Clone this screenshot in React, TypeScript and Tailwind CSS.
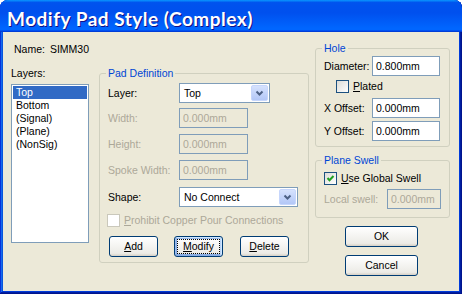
import React from 'react';

const Chevron = () => (
  <svg width="9" height="6" viewBox="0 0 9 6">
    <polyline points="1.5,1.5 4.5,4.5 7.5,1.5" fill="none" stroke="#4D6185" strokeWidth="2" />
  </svg>
);

const Combo = ({ value, w }: { value: string; w: string }) => (
  <div className={`h-[20px] ${w} border border-[#7F9DB9] bg-white flex items-center pl-[4px] pr-[1px]`}>
    <span className="flex-1">{value}</span>
    <div className="w-[17px] h-[16px] rounded-[2px] border border-[#C6D6FC] bg-[linear-gradient(180deg,#D6E2FD,#B3C7F7)] flex items-center justify-center">
      <Chevron />
    </div>
  </div>
);

const TextBox = ({ value, w, disabled }: { value: string; w: string; disabled?: boolean }) => (
  <div
    className={`h-[20px] ${w} border border-[#7F9DB9] pl-[3px] flex items-center ${
      disabled ? 'bg-[#ECE9D8] text-[#ACA899]' : 'bg-white text-black'
    }`}
  >
    {value}
  </div>
);

const Check = ({ checked, disabled }: { checked?: boolean; disabled?: boolean }) => (
  <div
    className={`w-[13px] h-[13px] border flex items-center justify-center ${
      disabled ? 'border-[#CAC8BB] bg-white' : 'border-[#1C5180] bg-[linear-gradient(135deg,#DCDCD7,#FFFFFF)]'
    }`}
  >
    {checked && (
      <svg width="9" height="9" viewBox="0 0 9 9">
        <polyline points="1.5,4 3.5,6.2 7.5,2" fill="none" stroke="#21A121" strokeWidth="2" />
      </svg>
    )}
  </div>
);

const Btn = ({ children, w, focused }: { children: React.ReactNode; w: string; focused?: boolean }) => (
  <button
    type="button"
    className={`h-[21px] ${w} border border-[#003C74] rounded-[3px] bg-[linear-gradient(180deg,#FFFFFF,#ECEBE6_86%,#D6D0C5)] flex items-center justify-center text-black ${
      focused
        ? 'shadow-[inset_-1px_1px_#CEE7FF,inset_1px_2px_#98B8EA,inset_-2px_2px_#BCD4F6,inset_1px_-1px_#89ADE4,inset_2px_-2px_#89ADE4] outline-1 outline-dotted outline-black outline-offset-[-4px]'
        : ''
    }`}
  >
    {children}
  </button>
);

const Group = ({ title, className, children }: { title: string; className: string; children: React.ReactNode }) => (
  <fieldset className={`border border-[#D0D0BF] rounded-[3px] p-0 ${className}`}>
    <legend className="ml-[6px] px-[2px] leading-[13px] text-[#0046D5]">{title}</legend>
    {children}
  </fieldset>
);

const layers = ['Top', 'Bottom', '(Signal)', '(Plane)', '(NonSig)'];

export default function App() {
  return (
    <div className="w-[462px] h-[294px] bg-white font-['Tahoma','Liberation_Sans',sans-serif] text-[10.5px] leading-[13px] text-black">
      <div className="w-full h-full flex flex-col rounded-t-[8px] overflow-hidden bg-[#0831D9] shadow-[inset_-1px_-1px_#00138C,inset_1px_1px_#0831D9,inset_-2px_-2px_#001EA0,inset_2px_2px_#166AEE,inset_-3px_-3px_#003BDA,inset_3px_3px_#0855DD]">
        {/* title bar */}
        <div className="h-[32px] shrink-0 flex items-center pl-[7px] pt-[4px] bg-[linear-gradient(180deg,#0997FF,#0053EE_8%,#0050EE_40%,#0066FF_88%,#0066FF_93%,#005BFF_95%,#003DD7_96%,#003DD7)]">
          <span className="font-['Lato',sans-serif] font-bold text-[19px] tracking-[0.5px] leading-none text-white [text-shadow:1px_1px_#0F1089]">
            Modify Pad Style (Complex)
          </span>
        </div>

        {/* body */}
        <div className="flex-1 mx-[3px] mb-[3px] bg-[#ECE9D8] flex items-start">
          {/* left column */}
          <div className="ml-[8px] w-[78px] flex flex-col">
            <div className="mt-[11px] ml-[3px] flex whitespace-nowrap">
              <span className="w-[38px]">Name:</span>
              <span>SIMM30</span>
            </div>
            <div className="mt-[11px]">Layers:</div>
            <div className="mt-[4px] h-[159px] border border-[#7F9DB9] bg-white p-[1px]">
              {layers.map((l, i) => (
                <div key={l} className={`h-[13px] pl-[3px] ${i === 0 ? 'bg-[#316AC5] text-white' : ''}`}>
                  {l}
                </div>
              ))}
            </div>
          </div>

          {/* pad definition */}
          <Group title="Pad Definition" className="ml-[10px] mt-[35px] w-[210px] h-[196px]">
            <div className="pl-[8px] pt-[3px] flex flex-col">
              <div className="flex items-center">
                <span className="w-[71px]">Layer:</span>
                <Combo value="Top" w="w-[91px]" />
              </div>
              <div className="mt-[5px] flex items-center">
                <span className="w-[71px] text-[#ACA899]">Width:</span>
                <TextBox value="0.000mm" w="w-[69px]" disabled />
              </div>
              <div className="mt-[6px] flex items-center">
                <span className="w-[71px] text-[#ACA899]">Height:</span>
                <TextBox value="0.000mm" w="w-[69px]" disabled />
              </div>
              <div className="mt-[6px] flex items-center">
                <span className="w-[71px] text-[#ACA899]">Spoke Width:</span>
                <TextBox value="0.000mm" w="w-[69px]" disabled />
              </div>
              <div className="mt-[7px] flex items-center">
                <span className="w-[71px]">Shape:</span>
                <Combo value="No Connect" w="w-[119px]" />
              </div>
              <div className="mt-[7px] -ml-[1px] flex items-center gap-[4px] text-[#ACA899]">
                <Check disabled />
                <span>
                  <span className="underline">P</span>rohibit Copper Pour Connections
                </span>
              </div>
              <div className="mt-[9px] ml-[1px] flex gap-[16px]">
                <Btn w="w-[49px]">
                  <span className="underline">A</span>dd
                </Btn>
                <Btn w="w-[49px]" focused>
                  <span className="underline">M</span>odify
                </Btn>
                <div className="ml-[1px]">
                  <Btn w="w-[49px]">
                    <span className="underline">D</span>elete
                  </Btn>
                </div>
              </div>
            </div>
          </Group>

          {/* right column */}
          <div className="ml-[6px] w-[135px] flex flex-col">
            <Group title="Hole" className="mt-[10px] h-[105px]">
              <div className="pl-[8px] pt-[1px] flex flex-col">
                <div className="flex items-center">
                  <span className="w-[48px]">Diameter:</span>
                  <TextBox value="0.800mm" w="w-[68px]" />
                </div>
                <div className="mt-[4px] ml-[12px] flex items-center gap-[4px]">
                  <Check />
                  <span>
                    <span className="underline">P</span>lated
                  </span>
                </div>
                <div className="mt-[5px] flex items-center">
                  <span className="w-[48px]">X Offset:</span>
                  <TextBox value="0.000mm" w="w-[68px]" />
                </div>
                <div className="mt-[3px] flex items-center">
                  <span className="w-[48px]">Y Offset:</span>
                  <TextBox value="0.000mm" w="w-[68px]" />
                </div>
              </div>
            </Group>

            <Group title="Plane Swell" className="mt-[7px] h-[64px]">
              <div className="pl-[8px] pt-[5px] flex flex-col">
                <div className="flex items-center gap-[4px]">
                  <Check checked />
                  <span>
                    <span className="underline">U</span>se Global Swell
                  </span>
                </div>
                <div className="mt-[4px] flex items-center">
                  <span className="w-[63px] text-[#ACA899]">Local swell:</span>
                  <TextBox value="0.000mm" w="w-[54px]" disabled />
                </div>
              </div>
            </Group>

            <div className="mt-[8px] ml-[30px] flex flex-col gap-[8px]">
              <Btn w="w-[73px]">OK</Btn>
              <Btn w="w-[73px]">Cancel</Btn>
            </div>
          </div>
        </div>
      </div>
    </div>
  );
}
